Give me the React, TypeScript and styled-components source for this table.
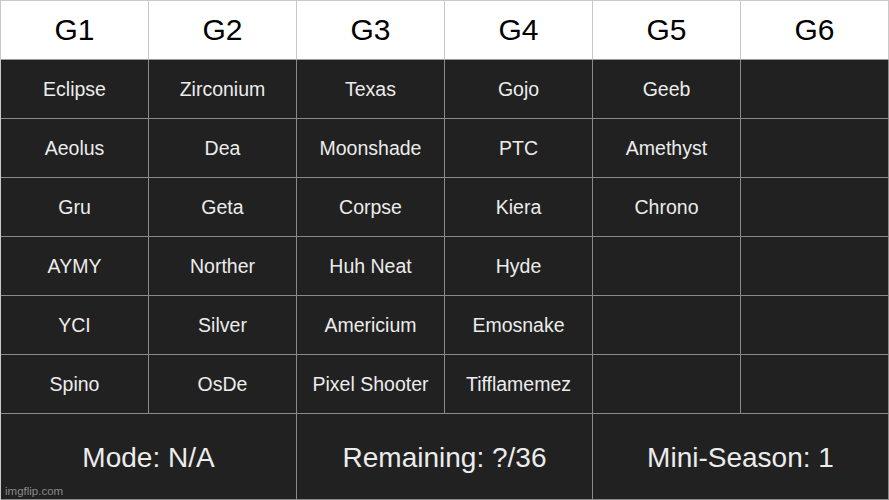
import styled, { createGlobalStyle } from "styled-components";

const GlobalStyle = createGlobalStyle`
  html, body {
    margin: 0;
    padding: 0;
    background: #ffffff;
  }
  body {
    font-family: "Liberation Sans", Arial, sans-serif;
  }
`;

const Board = styled.div`
  position: relative;
  width: 889px;
  height: 500px;
  box-sizing: border-box;
  display: grid;
  grid-template-columns: repeat(6, 1fr);
  grid-template-rows: 59px repeat(6, 59px) 86px;
  border-left: 1px solid #c9c9c9;
  border-top: 1px solid #c9c9c9;
  background: #212121;
`;

const HeadCell = styled.div`
  display: flex;
  align-items: center;
  justify-content: center;
  box-sizing: border-box;
  background: #ffffff;
  color: #000000;
  font-size: 30px;
  border-right: 1px solid #c9c9c9;
  border-bottom: 1px solid #9a9a9a;
`;

const Cell = styled.div`
  display: flex;
  align-items: center;
  justify-content: center;
  box-sizing: border-box;
  color: #ececec;
  font-size: 19.5px;
  border-right: 1px solid #8a8a8a;
  border-bottom: 1px solid #8a8a8a;
`;

const FootCell = styled(Cell)`
  grid-column: span 2;
  font-size: 28px;
  padding-top: 2px;
`;

const Watermark = styled.span`
  position: absolute;
  left: 4px;
  bottom: 3px;
  font-size: 11.5px;
  color: rgba(210, 210, 210, 0.6);
`;

const heads = ["G1", "G2", "G3", "G4", "G5", "G6"];

const rows = [
  ["Eclipse", "Zirconium", "Texas", "Gojo", "Geeb", ""],
  ["Aeolus", "Dea", "Moonshade", "PTC", "Amethyst", ""],
  ["Gru", "Geta", "Corpse", "Kiera", "Chrono", ""],
  ["AYMY", "Norther", "Huh Neat", "Hyde", "", ""],
  ["YCI", "Silver", "Americium", "Emosnake", "", ""],
  ["Spino", "OsDe", "Pixel Shooter", "Tifflamemez", "", ""],
];

const footer = ["Mode: N/A", "Remaining: ?/36", "Mini-Season: 1"];

export default function App() {
  return (
    <>
      <GlobalStyle />
      <Board>
        {heads.map((h) => (
          <HeadCell key={h}>{h}</HeadCell>
        ))}
        {rows.map((row, r) =>
          row.map((name, c) => <Cell key={`${r}-${c}`}>{name}</Cell>)
        )}
        {footer.map((f) => (
          <FootCell key={f}>{f}</FootCell>
        ))}
        <Watermark>imgflip.com</Watermark>
      </Board>
    </>
  );
}
